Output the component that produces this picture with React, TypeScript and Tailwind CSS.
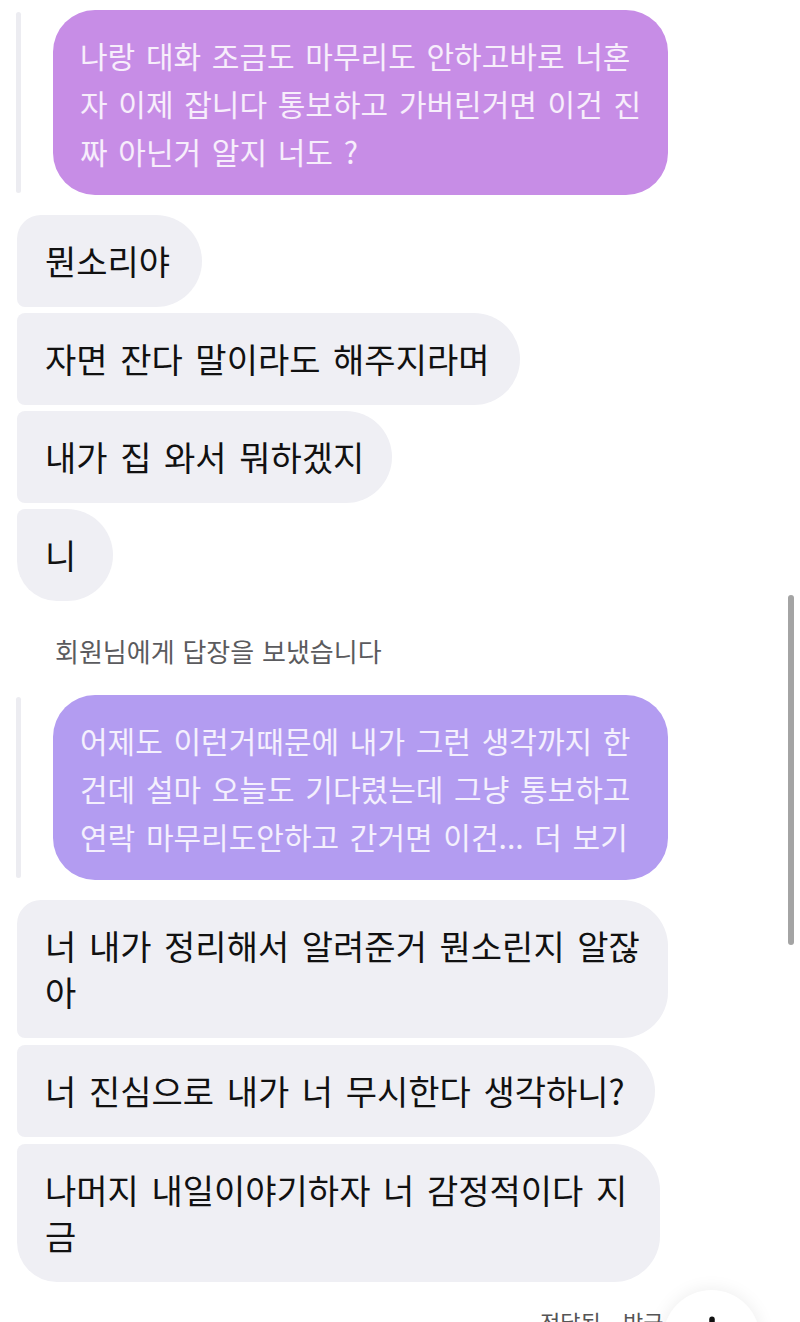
import { ArrowDown } from "lucide-react";

type Corner = "first" | "middle" | "last" | "single";

const grayRadius: Record<Corner, string> = {
  first: "rounded-tl-[24px] rounded-bl-[8px] rounded-r-[46px]",
  middle: "rounded-l-[8px] rounded-r-[46px]",
  last: "rounded-tl-[8px] rounded-bl-[40px] rounded-r-[46px]",
  single: "rounded-[46px]",
};

function GrayBubble({
  lines,
  width,
  corner,
}: {
  lines: string[];
  width: string;
  corner: Corner;
}) {
  return (
    <div
      className={`${width} ${grayRadius[corner]} bg-[#efeff4] px-[28px] py-[23px] text-[34px] leading-[46px] [word-spacing:5px] text-[#111] whitespace-nowrap`}
    >
      {lines.map((l, i) => (
        <div key={i}>{l}</div>
      ))}
    </div>
  );
}

function ReplyBubble({ lines, color }: { lines: string[]; color: string }) {
  return (
    <div className="flex items-stretch">
      <div className="w-[5px] my-[2px] rounded-full bg-[#ececf1]" />
      <div
        className={`ml-[32px] w-[615px] rounded-[42px] ${color} pl-[27px] pt-[21px] pb-[20px] text-[30px] leading-[48px] [word-spacing:4px] text-white/85 whitespace-nowrap`}
      >
        {lines.map((l, i) => (
          <div key={i}>{l}</div>
        ))}
      </div>
    </div>
  );
}

export default function App() {
  return (
    <div className="relative h-[1322px] w-[800px] overflow-hidden bg-white font-['Noto_Sans_CJK_KR','Noto_Sans',sans-serif]">
      <div className="flex flex-col pt-[10px] pl-[16px]">
        <ReplyBubble
          color="bg-[#c78de6]"
          lines={[
            "나랑 대화 조금도 마무리도 안하고바로 너혼",
            "자 이제 잡니다 통보하고 가버린거면 이건 진",
            "짜 아닌거 알지 너도 ?",
          ]}
        />

        <div className="mt-[20px] flex flex-col items-start gap-[6px] pl-[1px]">
          <GrayBubble width="w-[185px]" corner="first" lines={["뭔소리야"]} />
          <GrayBubble
            width="w-[503px]"
            corner="middle"
            lines={["자면 잔다 말이라도 해주지라며"]}
          />
          <GrayBubble
            width="w-[375px]"
            corner="middle"
            lines={["내가 집 와서 뭐하겠지"]}
          />
          <GrayBubble width="w-[96px]" corner="last" lines={["니"]} />
        </div>

        <div className="mt-[33px] ml-[39px] text-[26px] leading-[34px] [word-spacing:2px] text-[#5b5b5e]">
          회원님에게 답장을 보냈습니다
        </div>

        <div className="mt-[27px]">
          <ReplyBubble
            color="bg-[#b39cf1]"
            lines={[
              "어제도 이런거때문에 내가 그런 생각까지 한",
              "건데 설마 오늘도 기다렸는데 그냥 통보하고",
              "연락 마무리도안하고 간거면 이건... 더 보기",
            ]}
          />
        </div>

        <div className="mt-[20px] flex flex-col items-start gap-[7px] pl-[1px]">
          <GrayBubble
            width="w-[651px]"
            corner="first"
            lines={["너 내가 정리해서 알려준거 뭔소린지 알잖", "아"]}
          />
          <GrayBubble
            width="w-[638px]"
            corner="middle"
            lines={["너 진심으로 내가 너 무시한다 생각하니?"]}
          />
          <GrayBubble
            width="w-[643px]"
            corner="last"
            lines={["나머지 내일이야기하자 너 감정적이다 지", "금"]}
          />
        </div>

        <div className="mt-[24px] pl-[524px] text-[22px] leading-[30px] text-[#555]">
          전달됨 · 방금
        </div>
      </div>

      <div className="absolute left-[788px] top-[595px] h-[350px] w-[6px] rounded-full bg-[#a4a4a4]" />

      <div className="absolute left-[663px] top-[1290px] flex h-[97px] w-[97px] items-start justify-center rounded-full bg-white shadow-[0_0_18px_rgba(0,0,0,0.08)]">
        <ArrowDown className="mt-[20px] h-[44px] w-[44px] text-[#111]" strokeWidth={3} />
      </div>
    </div>
  );
}
